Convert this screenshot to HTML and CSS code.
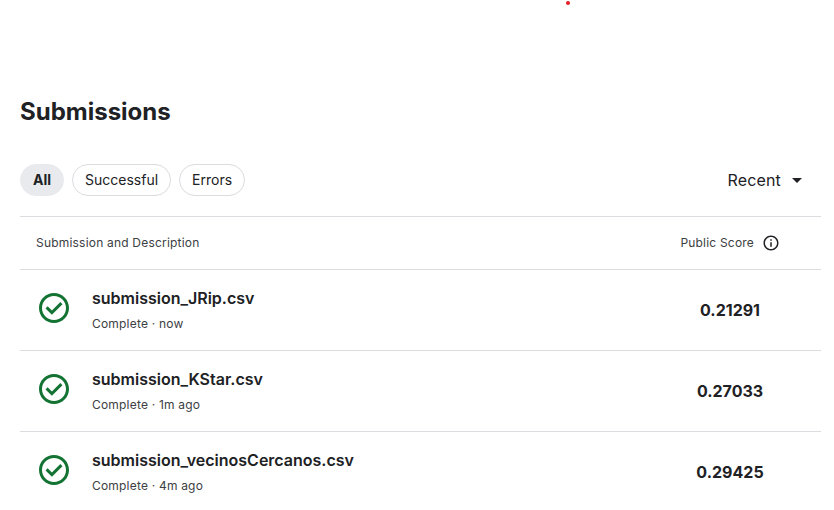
FILE: index.html
```html
<!DOCTYPE html>
<html lang="en">
<head>
<meta charset="utf-8">
<title>Submissions</title>
<link rel="stylesheet" href="styles.css">
</head>
<body>
<svg class="defs" width="0" height="0"><defs><symbol id="check" viewBox="0 0 24 24"><path d="m10.6 16.500 7.050-7.050-1.400-1.400-5.650 5.650-2.850-2.850-1.400 1.400zM12 2C6.480 2 2 6.480 2 12s4.480 10 10 10 10-4.480 10-10S17.520 2 12 2zm0 18c-4.420 0-8-3.580-8-8s3.580-8 8-8 8 3.580 8 8-3.580 8-8 8z"/></symbol></defs></svg>
<i class="dot"></i>
<main class="page">
  <h1>Submissions</h1>
  <div class="toolbar">
    <div class="chips"><button class="chip active">All</button><button class="chip">Successful</button><button class="chip">Errors</button></div>
    <div class="sort"><span>Recent</span><svg width="24" height="24" viewBox="0 0 24 24"><path d="m7 10 5 5 5-5z"/></svg></div>
  </div>
  <div class="head"><span class="label">Submission and Description</span><div class="score-head"><span class="label">Public Score</span><svg width="18" height="18" viewBox="0 0 24 24"><path d="M11 7h2v2h-2zm0 4h2v6h-2zm1-9C6.480 2 2 6.480 2 12s4.480 10 10 10 10-4.480 10-10S17.520 2 12 2zm0 18c-4.410 0-8-3.590-8-8s3.590-8 8-8 8 3.590 8 8-3.590 8-8 8z"/></svg></div></div>
  <div class="row"><svg class="check"><use href="#check"/></svg><div class="info"><div class="name">submission_JRip.csv</div><div class="meta">Complete · now</div></div><div class="score">0.21291</div></div>
  <div class="row"><svg class="check"><use href="#check"/></svg><div class="info"><div class="name">submission_KStar.csv</div><div class="meta">Complete · 1m ago</div></div><div class="score">0.27033</div></div>
  <div class="row"><svg class="check"><use href="#check"/></svg><div class="info"><div class="name">submission_vecinosCercanos.csv</div><div class="meta">Complete · 4m ago</div></div><div class="score">0.29425</div></div>
</main>
</body>
</html>
```
FILE: styles.css
```css
* { box-sizing: border-box; }
body { margin: 0; background: #fff; color: #202124; font-family: Inter, sans-serif; overflow: hidden; }
.defs { position: absolute; }
.dot { position: absolute; left: 566px; top: 1px; width: 4px; height: 4px; border-radius: 50%; background: #e91c24; }
.page { padding: 96px 13px 0 20px; }
h1 { margin: 0; font-size: 24px; line-height: 32px; font-weight: 700; }
.toolbar { display: flex; justify-content: space-between; align-items: center; height: 32px; margin: 36px 0 20px; }
.chips { display: flex; gap: 8px; }
.chip { height: 32px; padding: 0 12px; border: 1px solid #dadce0; border-radius: 16px; background: #fff; color: #202124; font: 400 14px/20px Inter, sans-serif; }
.chip.active { border-color: #e8eaed; background: #e8eaed; font-weight: 700; }
.sort { display: flex; align-items: center; gap: 4px; padding-right: 12px; font-size: 16px; letter-spacing: .15px; }
.sort svg, .score-head svg { fill: #202124; }
.head { display: flex; justify-content: space-between; align-items: center; height: 53px; padding: 0 41px 0 16px; border-top: 1px solid #dadce0; font-size: 12px; color: #3c4043; letter-spacing: .2px; }
.label { padding-bottom: 2px; }
.score-head { display: flex; align-items: center; gap: 8px; }
.row { display: flex; height: 81px; border-top: 1px solid #dadce0; padding: 16px 41px 0 16px; }
.check { width: 36px; height: 36px; margin-top: 4px; fill: #137333; }
.info { flex: 1; margin-left: 20px; }
.name { font-size: 16px; line-height: 24px; font-weight: 600; }
.meta { font-size: 12px; line-height: 16px; margin-top: 6px; color: #3c4043; letter-spacing: .2px; }
.score { width: 100px; text-align: center; font-size: 16px; line-height: 48px; font-weight: 700; }
```
